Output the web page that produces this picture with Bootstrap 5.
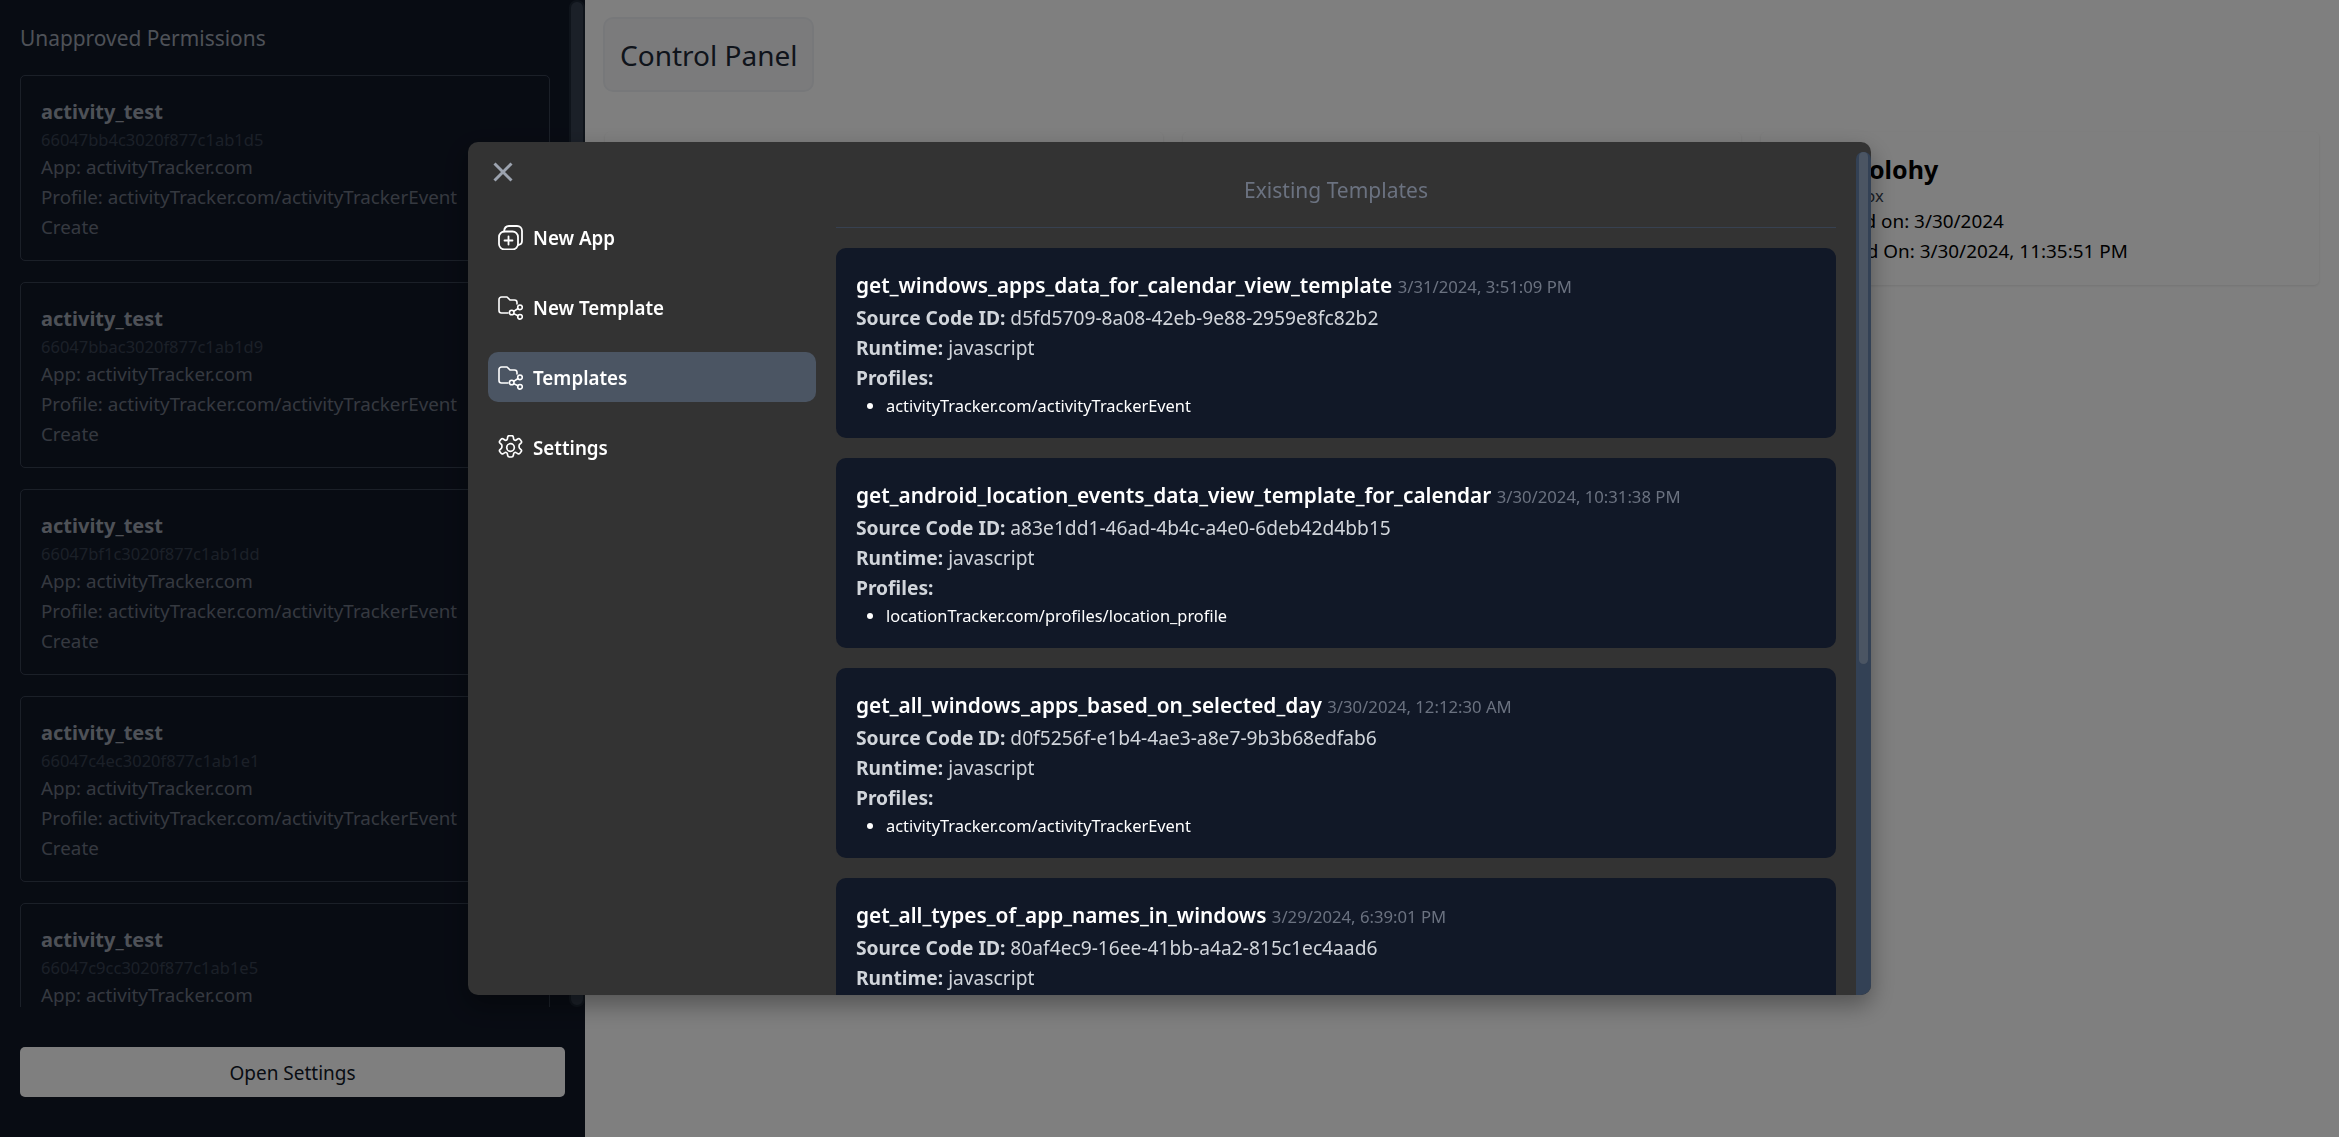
<!DOCTYPE html>
<html lang="en">
<head>
<meta charset="UTF-8">
<title>Control Panel</title>
<link href="https://cdn.jsdelivr.net/npm/bootstrap@5.3.0/dist/css/bootstrap.min.css" rel="stylesheet">
<style>
html, body { height: 100%; }
body { font-family: "Noto Sans", "Liberation Sans", sans-serif; font-size: 19.2px; line-height: 30px; background: #fff; overflow: hidden; }
.app-shell { height: 1137px; }
.side-pane { width: 585px; background: #111827; flex: none; }
.side-top { height: 1007px; }
.side-list { width: 550px; padding-left: 20px; overflow: hidden; }
.side-title { font-size: 20.900px; line-height: 34px; color: #9ca3af; font-weight: 400; margin: 21px 0 20px; }
.perm-box { border: 1px solid #374151; border-radius: 5px; padding: 21px 20px 0; margin-bottom: 21px; height: 186px; font-size: 18.800px; color: #6b7280; white-space: nowrap; }
.perm-name { font-size: 20px; font-weight: 700; color: #9ca3af; line-height: 30px; }
.perm-id { font-size: 16.500px; line-height: 25px; color: #374151; }
.side-rail { width: 16px; margin-left: 19px; background: #374151; border: 2px solid #1f2937; border-radius: 8px; }
.open-btn { display: block; width: 545px; height: 50px; margin: 40px 0 0 20px; padding-top: 3px; background: #fff; border: 0; border-radius: 5px; color: #111827; font-size: 19px; }
.main-pane { padding: 17px 20px 0 18px; }
.cp-box { width: 211px; height: 75px; background: #f6f7f9; border: 2px solid #eff1f4; border-radius: 10px; padding: 0 15px; font-size: 28px; line-height: 73px; color: #1f2937; margin-bottom: 40px; white-space: nowrap; }
.info-grid { display: grid; grid-template-columns: repeat(3, 1fr); gap: 20px; margin-left: 2px; }
.info-box { height: 153px; padding: 20px; background: #fff; box-shadow: 0 1px 3px rgba(0,0,0,.1); border-radius: 5px; color: #000; font-size: 18.900px; white-space: nowrap; }
.info-name { font-size: 25px; line-height: 34px; font-weight: 700; }
.info-sub { font-size: 16.500px; line-height: 20px; color: #374151; }
.dim-layer { position: fixed; inset: 0; background: rgba(0,0,0,.5); }
.tpl-modal { position: fixed; left: 468px; top: 142px; width: 1403px; height: 853px; background: #333; border-radius: 10px; box-shadow: 0 10px 25px rgba(0,0,0,.35); overflow: hidden; }
.tpl-nav { width: 368px; padding: 20px; flex: none; }
.tpl-close { background: none; border: 0; padding: 0; display: block; margin: 0 0 30px 5px; width: 20px; height: 20px; }
.tpl-close svg { display: block; }
.tpl-link { display: flex; align-items: center; gap: 10px; height: 50px; padding: 1px 10px 0; margin-bottom: 20px; border-radius: 10px; color: #fff; font-size: 18.800px; font-weight: 600; text-decoration: none; }
.tpl-link.is-on { background: #4b5563; }
.tpl-link svg { flex: none; }
.tpl-scroll { width: 1000px; flex: none; overflow: hidden; }
.tpl-head { height: 86px; padding-top: 33px; text-align: center; color: #6b7280; font-size: 21px; line-height: 30px; border-bottom: 1px solid #374151; margin-bottom: 20px; }
.tpl-box { background: #111827; border-radius: 10px; padding: 21px 20px 0; height: 190px; margin-bottom: 20px; color: #d1d5db; white-space: nowrap; }
.tpl-name { font-size: 20.850px; line-height: 33px; font-weight: 600; color: #fff; }
.tpl-date { font-size: 16.700px; font-weight: 400; color: #6b7280; }
.tpl-box ul { margin: 0; padding-left: 30px; font-size: 16.400px; line-height: 25px; color: #fff; }
.tpl-rail { width: 15px; margin: 10px 0 0 20px; padding: 0 3px; background: #334155; border-radius: 7px 7px 0 0; flex: none; }
.tpl-thumb { height: 512px; background: #4b5563; border-radius: 5px; }
</style>
</head>
<body>
<div class="app-shell d-flex">
  <aside class="side-pane">
    <div class="side-top d-flex">
      <div class="side-list">
        <h2 class="side-title">Unapproved Permissions</h2>
        <div class="perm-box"><div class="perm-name">activity_test</div><div class="perm-id">66047bb4c3020f877c1ab1d5</div><div>App: activityTracker.com</div><div>Profile: activityTracker.com/activityTrackerEvent</div><div>Create</div></div>
        <div class="perm-box"><div class="perm-name">activity_test</div><div class="perm-id">66047bbac3020f877c1ab1d9</div><div>App: activityTracker.com</div><div>Profile: activityTracker.com/activityTrackerEvent</div><div>Create</div></div>
        <div class="perm-box"><div class="perm-name">activity_test</div><div class="perm-id">66047bf1c3020f877c1ab1dd</div><div>App: activityTracker.com</div><div>Profile: activityTracker.com/activityTrackerEvent</div><div>Create</div></div>
        <div class="perm-box"><div class="perm-name">activity_test</div><div class="perm-id">66047c4ec3020f877c1ab1e1</div><div>App: activityTracker.com</div><div>Profile: activityTracker.com/activityTrackerEvent</div><div>Create</div></div>
        <div class="perm-box"><div class="perm-name">activity_test</div><div class="perm-id">66047c9cc3020f877c1ab1e5</div><div>App: activityTracker.com</div></div>
      </div>
      <div class="side-rail"></div>
    </div>
    <button class="open-btn" type="button">Open Settings</button>
  </aside>
  <main class="main-pane flex-grow-1">
    <div class="cp-box">Control Panel</div>
    <div class="info-grid">
      <div class="info-box"></div>
      <div class="info-box"></div>
      <div class="info-box">
        <div class="info-name">Teachnolohy</div>
        <div class="info-sub">Test Sandbox</div>
        <div>Registered on: 3/30/2024</div>
        <div>Last Edited On: 3/30/2024, 11:35:51 PM</div>
      </div>
    </div>
  </main>
</div>

<div class="dim-layer"></div>

<div class="tpl-modal d-flex">
  <nav class="tpl-nav">
    <button class="tpl-close" type="button" aria-label="Close">
      <svg width="20" height="20" viewBox="0 0 20 20"><path d="M1.500 1.500l17 17M18.500 1.500l-17 17" stroke="#9ca3af" stroke-width="3" fill="none"/></svg>
    </button>
    <a class="tpl-link" href="#">
      <svg width="25" height="25" viewBox="0 0 25 25" fill="none" stroke="#fff" stroke-width="1.800" stroke-linecap="round" stroke-linejoin="round"><rect x="1" y="6.500" width="19" height="18" rx="5.500"/><path d="M6 6.500C6.300 3 8.300 1 11 1h8c3 0 5 2.200 5 5v10c0 2-1.500 3.700-4 4"/><path d="M10.500 11.500v8M6.500 15.500h8"/></svg>
      New App
    </a>
    <a class="tpl-link" href="#">
      <svg width="25" height="25" viewBox="0 0 25 25" fill="none" stroke="#fff" stroke-width="1.600" stroke-linecap="round" stroke-linejoin="round"><path d="M10 18H3.500A2.500 2.500 0 0 1 1 15.500V4.500A2.500 2.500 0 0 1 3.500 2H9l3 3h4.500A2.500 2.500 0 0 1 19 7.500V9"/><circle cx="22" cy="12.300" r="2.300"/><circle cx="13.700" cy="17.500" r="2.300"/><circle cx="22" cy="21.800" r="2.300"/><path d="M15.700 16.300l4.300-2.800M15.700 18.600l4.300 2.200"/></svg>
      New Template
    </a>
    <a class="tpl-link is-on" href="#">
      <svg width="25" height="25" viewBox="0 0 25 25" fill="none" stroke="#fff" stroke-width="1.600" stroke-linecap="round" stroke-linejoin="round"><path d="M10 18H3.500A2.500 2.500 0 0 1 1 15.500V4.500A2.500 2.500 0 0 1 3.500 2H9l3 3h4.500A2.500 2.500 0 0 1 19 7.500V9"/><circle cx="22" cy="12.300" r="2.300"/><circle cx="13.700" cy="17.500" r="2.300"/><circle cx="22" cy="21.800" r="2.300"/><path d="M15.700 16.300l4.300-2.800M15.700 18.600l4.300 2.200"/></svg>
      Templates
    </a>
    <a class="tpl-link" href="#">
      <svg width="25" height="25" viewBox="1.500 1.500 21 21" fill="none" stroke="#fff" stroke-width="1.400" stroke-linecap="round" stroke-linejoin="round"><path d="M9.600 3.300c.1-.7.700-1.300 1.500-1.300h1.800c.8 0 1.400.6 1.500 1.300l.2 1.400c.1.500.4.900.9 1.100.4.200.9.200 1.300-.1l1.200-.8c.6-.4 1.400-.4 1.900.2l1 1.300c.5.600.4 1.400-.1 1.900l-1.100 1c-.4.300-.5.800-.5 1.300v.800c0 .5.100 1 .5 1.300l1.100 1c.5.500.6 1.300.1 1.900l-1 1.300c-.5.600-1.300.6-1.900.2l-1.200-.8c-.4-.3-.9-.3-1.300-.1-.5.200-.8.600-.9 1.100l-.2 1.400c-.1.700-.7 1.300-1.500 1.300h-1.800c-.8 0-1.400-.6-1.500-1.300l-.2-1.400c-.1-.5-.4-.9-.9-1.100-.4-.2-.9-.2-1.300.1l-1.200.8c-.6.400-1.400.4-1.900-.2l-1-1.300c-.5-.6-.4-1.400.1-1.900l1.100-1c.4-.3.500-.8.500-1.300v-.800c0-.5-.1-1-.5-1.300l-1.100-1c-.5-.5-.6-1.300-.1-1.900l1-1.300c.5-.6 1.300-.6 1.900-.2l1.200.8c.4.300.9.300 1.300.1.500-.2.800-.6.900-1.100z"/><circle cx="12" cy="12" r="3.200"/></svg>
      Settings
    </a>
  </nav>
  <section class="tpl-scroll">
    <div class="tpl-head">Existing Templates</div>
    <div class="tpl-box"><div class="tpl-name">get_windows_apps_data_for_calendar_view_template <span class="tpl-date">3/31/2024, 3:51:09 PM</span></div><div><b>Source Code ID:</b> d5fd5709-8a08-42eb-9e88-2959e8fc82b2</div><div><b>Runtime:</b> javascript</div><div><b>Profiles:</b></div><ul><li>activityTracker.com/activityTrackerEvent</li></ul></div>
    <div class="tpl-box"><div class="tpl-name">get_android_location_events_data_view_template_for_calendar <span class="tpl-date">3/30/2024, 10:31:38 PM</span></div><div><b>Source Code ID:</b> a83e1dd1-46ad-4b4c-a4e0-6deb42d4bb15</div><div><b>Runtime:</b> javascript</div><div><b>Profiles:</b></div><ul><li>locationTracker.com/profiles/location_profile</li></ul></div>
    <div class="tpl-box"><div class="tpl-name">get_all_windows_apps_based_on_selected_day <span class="tpl-date">3/30/2024, 12:12:30 AM</span></div><div><b>Source Code ID:</b> d0f5256f-e1b4-4ae3-a8e7-9b3b68edfab6</div><div><b>Runtime:</b> javascript</div><div><b>Profiles:</b></div><ul><li>activityTracker.com/activityTrackerEvent</li></ul></div>
    <div class="tpl-box"><div class="tpl-name">get_all_types_of_app_names_in_windows <span class="tpl-date">3/29/2024, 6:39:01 PM</span></div><div><b>Source Code ID:</b> 80af4ec9-16ee-41bb-a4a2-815c1ec4aad6</div><div><b>Runtime:</b> javascript</div></div>
  </section>
  <div class="tpl-rail"><div class="tpl-thumb"></div></div>
</div>
<script src="https://cdn.jsdelivr.net/npm/bootstrap@5.3.0/dist/js/bootstrap.bundle.min.js"></script>
</body>
</html>
